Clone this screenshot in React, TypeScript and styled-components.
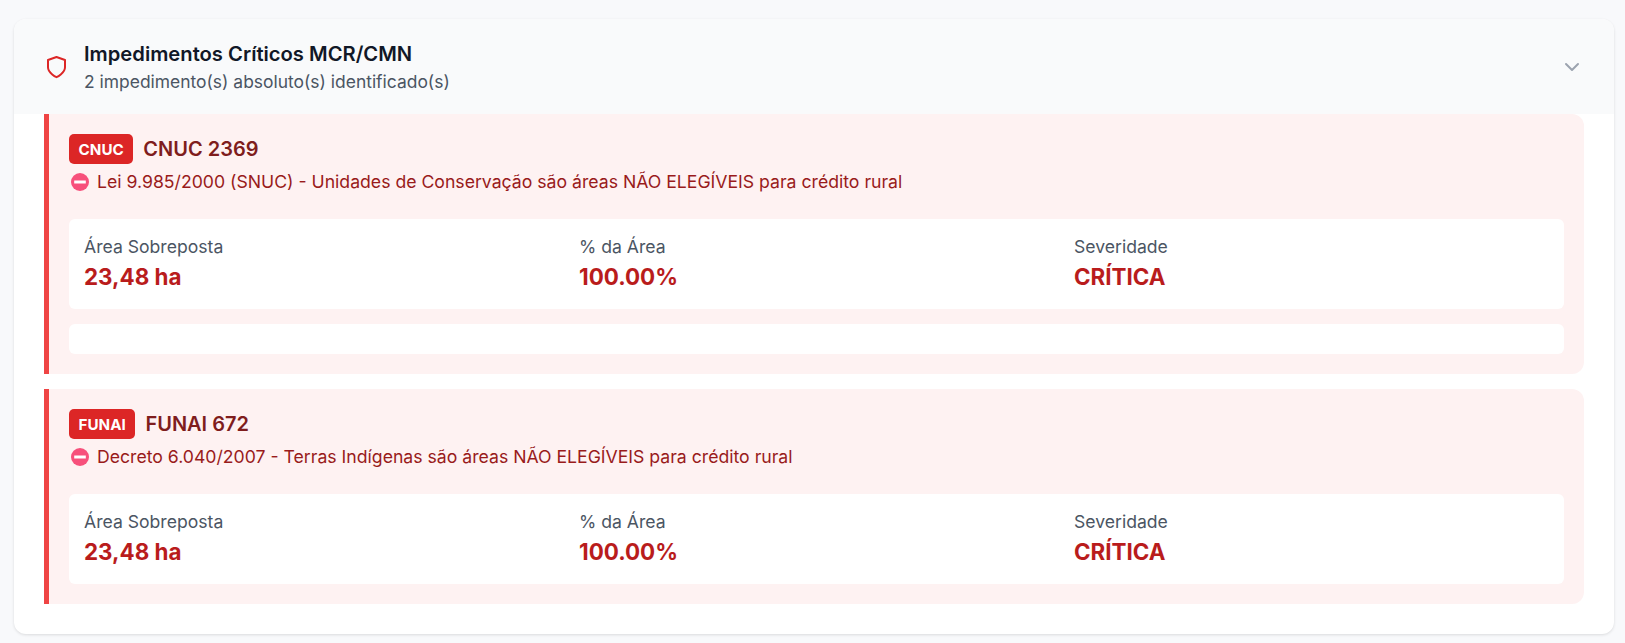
import React from 'react';
import styled, { createGlobalStyle } from 'styled-components';
import { ChevronDown } from 'lucide-react';

const GlobalStyle = createGlobalStyle`
  html, body {
    margin: 0;
    background: #f8f9fb;
    font-family: Inter, "Liberation Sans", sans-serif;
  }
`;

const Page = styled.div`
  padding: 19px 11px 9px 14px;
`;

const Card = styled.section`
  background: #ffffff;
  border-radius: 12px;
  overflow: hidden;
  box-shadow: 0 1px 3px rgba(0, 0, 0, 0.12);
  padding-bottom: 30px;
`;

const Header = styled.header`
  height: 95px;
  box-sizing: border-box;
  background: #f9fafb;
  display: flex;
  align-items: center;
  justify-content: space-between;
  padding: 0 30px;
`;

const HeaderLeft = styled.div`
  display: flex;
  align-items: center;
  gap: 16px;
`;

const HeaderText = styled.div`
  padding-top: 2px;
`;

const HeaderTitle = styled.div`
  font-size: 20.2px;
  line-height: 28px;
  font-weight: 600;
  color: #111827;
`;

const HeaderSub = styled.div`
  font-size: 17.44px;
  line-height: 28px;
  color: #4b5563;
`;

const List = styled.div`
  display: flex;
  flex-direction: column;
  gap: 15px;
  padding: 0 30px;
`;

const Item = styled.article`
  background: #fef2f2;
  border-left: 5px solid #ef4444;
  border-radius: 0 12px 12px 0;
  padding: 20px;
`;

const TitleRow = styled.div`
  display: flex;
  align-items: center;
  gap: 10px;
  height: 30px;
`;

const Badge = styled.span`
  background: #dc2626;
  color: #ffffff;
  border-radius: 5px;
  height: 30px;
  padding: 0 9.6px;
  display: flex;
  align-items: center;
  font-size: 15.2px;
  font-weight: 700;
`;

const ItemTitle = styled.span`
  font-size: 20px;
  font-weight: 600;
  color: #7f1d1d;
`;

const Reason = styled.div`
  display: flex;
  align-items: center;
  gap: 8px;
  height: 25px;
  margin-top: 5px;
  padding-left: 2px;
  font-size: 17.65px;
  color: #991b1b;
`;

const Stats = styled.div`
  display: grid;
  grid-template-columns: repeat(3, 1fr);
  gap: 20px;
  margin-top: 25px;
  padding: 15px;
  height: 90px;
  box-sizing: border-box;
  background: #ffffff;
  border-radius: 6px;
`;

const StatLabel = styled.div`
  font-size: 17.6px;
  line-height: 26px;
  margin-bottom: 2px;
  color: #4b5563;
`;

const StatValue = styled.div`
  font-size: 22.4px;
  line-height: 30px;
  font-weight: 700;
  color: #b91c1c;
`;

const EmptyBox = styled.div`
  height: 30px;
  margin-top: 15px;
  background: #ffffff;
  border-radius: 6px;
`;

const ShieldIcon = () => (
  <svg width="24" height="24" viewBox="0 0 24 24" fill="none" stroke="#dc2626" strokeWidth="2" strokeLinejoin="round">
    <path d="M12.5 22.2s8.5-4 8.5-10V5l-8.5-3-8.5 3v7.2c0 6 8.5 10 8.5 10z" />
  </svg>
);

const NoEntry = () => (
  <svg width="18" height="18" viewBox="0 0 18 18">
    <circle cx="9" cy="9" r="9" fill="#f7507b" />
    <rect x="3.2" y="7.5" width="11.6" height="3" fill="#ffffff" />
  </svg>
);

const items = [
  {
    badge: 'CNUC',
    title: 'CNUC 2369',
    reason: 'Lei 9.985/2000 (SNUC) - Unidades de Conservação são áreas NÃO ELEGÍVEIS para crédito rural',
    extra: true,
  },
  {
    badge: 'FUNAI',
    title: 'FUNAI 672',
    reason: 'Decreto 6.040/2007 - Terras Indígenas são áreas NÃO ELEGÍVEIS para crédito rural',
    extra: false,
  },
];

const stats = [
  { label: 'Área Sobreposta', value: '23,48 ha' },
  { label: '% da Área', value: '100.00%' },
  { label: 'Severidade', value: 'CRÍTICA' },
];

export default function App() {
  return (
    <>
      <GlobalStyle />
      <Page>
        <Card>
          <Header>
            <HeaderLeft>
              <ShieldIcon />
              <HeaderText>
                <HeaderTitle>Impedimentos Críticos MCR/CMN</HeaderTitle>
                <HeaderSub>2 impedimento(s) absoluto(s) identificado(s)</HeaderSub>
              </HeaderText>
            </HeaderLeft>
            <ChevronDown size={24} color="#9ca3af" strokeWidth={2} />
          </Header>
          <List>
            {items.map((item) => (
              <Item key={item.title}>
                <TitleRow>
                  <Badge>{item.badge}</Badge>
                  <ItemTitle>{item.title}</ItemTitle>
                </TitleRow>
                <Reason>
                  <NoEntry />
                  {item.reason}
                </Reason>
                <Stats>
                  {stats.map((stat) => (
                    <div key={stat.label}>
                      <StatLabel>{stat.label}</StatLabel>
                      <StatValue>{stat.value}</StatValue>
                    </div>
                  ))}
                </Stats>
                {item.extra && <EmptyBox />}
              </Item>
            ))}
          </List>
        </Card>
      </Page>
    </>
  );
}
